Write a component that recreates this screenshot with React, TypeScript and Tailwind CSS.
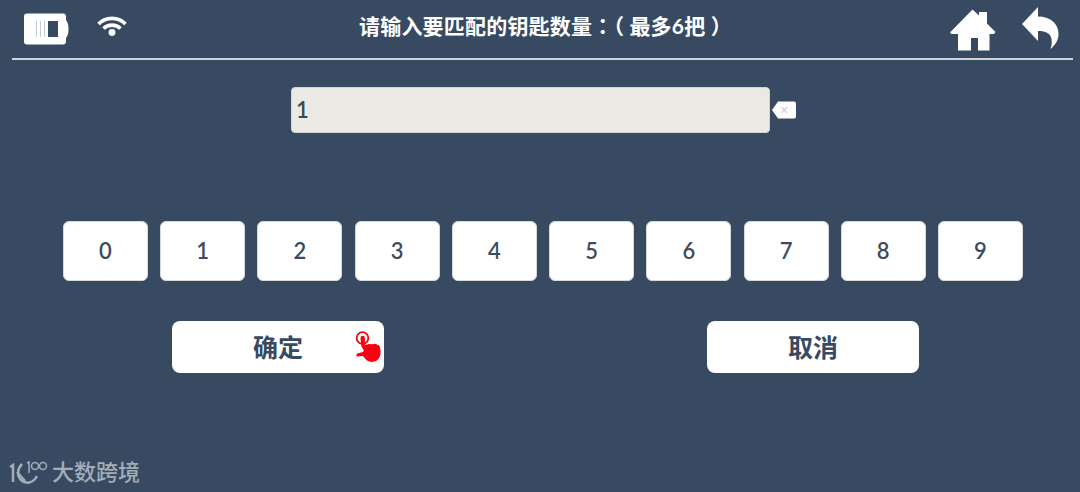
import React from 'react'

const keys = ['0', '1', '2', '3', '4', '5', '6', '7', '8', '9']

function Battery() {
  return (
    <svg width="45" height="32" viewBox="0 0 45 32">
      <path d="M3 0.500h36a3 3 0 0 1 3 3v4h.5c1.500 3 2 5 2 8.500s-.5 6-2 8.500H42v4a3 3 0 0 1-3 3H3a3 3 0 0 1-3-3v-25a3 3 0 0 1 3-3z" fill="#fff" />
      <rect x="8" y="8" width="26" height="16" fill="#374a61" />
      <rect x="8" y="8" width="16" height="16" fill="#fff" />
      <rect x="12" y="8" width="1" height="16" fill="#c5ccd4" />
      <rect x="16" y="8" width="1" height="16" fill="#c5ccd4" />
      <rect x="20" y="8" width="1" height="16" fill="#c5ccd4" />
    </svg>
  )
}

function Wifi() {
  return (
    <svg width="30" height="20" viewBox="0 0 30 20" fill="none" stroke="#fff" strokeWidth="3.600">
      <path d="M1.500 8C9 .5 21 .5 28.500 8" />
      <path d="M6.500 12.500C11 8 19 8 23.500 12.500" />
      <circle cx="15" cy="16.500" r="3.400" fill="#fff" stroke="none" />
    </svg>
  )
}

function Home() {
  return (
    <svg width="46" height="42" viewBox="0 0 46 42" fill="#fff">
      <path d="M22.500 0.500L29 6.500V3h8v11.500l8.500 8.500-1.500 2h-4.500v16.500H28V29h-7v12.500H8V25H1.500L0 23.500z" />
    </svg>
  )
}

function Back() {
  return (
    <svg width="37" height="42" viewBox="0 0 37 42" fill="#fff">
      <path d="M16 0V9.500C28 9.500 36.500 16 36.500 27c0 6-3 11-8 15 1.500-4 2-9 0-13-2-3.500-6-5-12.500-5v10L0 17z" />
    </svg>
  )
}

function Backspace() {
  return (
    <svg width="24" height="18" viewBox="0 0 24 18">
      <path d="M6 0.500h16a2 2 0 0 1 2 2v13a2 2 0 0 1-2 2H6L0 9z" fill="#fff" />
      <path d="M9.500 6l5.500 6M15 6l-5.500 6" stroke="#d0d3d6" strokeWidth="1.200" />
    </svg>
  )
}

function Hand() {
  return (
    <svg width="28" height="34" viewBox="0 0 28 34">
      <circle cx="7.500" cy="8" r="5.800" fill="none" stroke="#fb0010" strokeWidth="1.800" />
      <path d="M5.500 8a2.200 2.200 0 0 1 4.400 0v7l2-.5 2-.5 3 .3 3-.5 4 1.500c1.500 2 2 6 1.500 9-.6 3.500-2.500 6-5 7l-4.500.6-4-1.500-4-4.500-5.500.6c-1.500-.2-1.500-2.300 0-3l5.500-1.500 1-1.500-2.500-4z" fill="#fb0010" />
    </svg>
  )
}

function Logo() {
  return (
    <svg width="42" height="28" viewBox="0 0 42 28" fill="none" stroke="#a3adb8">
      <path d="M1 9l3-2v17" strokeWidth="2.500" />
      <path d="M13 6C8 11 8 18 12 22c4 4 12 4 16-4" strokeWidth="2.500" />
      <path d="M8 14l8 9" strokeWidth="2.500" />
      <path d="M18 5l2-1v11" strokeWidth="1.500" />
      <circle cx="26" cy="8" r="3.500" strokeWidth="1.500" />
      <circle cx="34" cy="8" r="3.500" strokeWidth="1.500" />
    </svg>
  )
}

export default function App() {
  return (
    <div className="relative w-[1080px] h-[492px] overflow-hidden bg-[#374a61] font-['Lato','Noto_Sans_CJK_SC',sans-serif]">
      <header className="mx-3 w-[1061px] h-[60px] border-b-2 border-[#cfd4d9] flex items-center">
        <div className="w-[12px]" />
        <Battery />
        <div className="ml-[28px] mb-[6px]">
          <Wifi />
        </div>
        <h1 className="ml-[232px] mb-[6px] w-[364px] text-white text-[21px] font-bold tracking-[0.2px] whitespace-nowrap">
          请输入要匹配的钥匙数量<span className="font-['Noto_Sans_CJK_TC']">：</span>（ 最多6把 ）
        </h1>
        <div className="ml-[227px] mt-[2px]">
          <Home />
        </div>
        <div className="ml-[26px] mb-[2px]">
          <Back />
        </div>
      </header>

      <div className="mt-[27px] ml-[291px] flex items-center gap-[2px]">
        <input
          readOnly
          value="1"
          className="w-[479px] h-[46px] rounded-[4px] border border-[#d5d5d0] bg-[#eae9e3] px-[4px] pb-[2px] text-[22px] text-[#374a61] font-semibold outline-none"
        />
        <Backspace />
      </div>

      <div className="mt-[88px] mx-[63px] w-[960px] flex justify-between">
        {keys.map((k) => (
          <button key={k} className="w-[85px] h-[60px] rounded-[6px] bg-white border border-[#d5d9dd] pb-[2px] text-[#3d4c5f] text-[22px] font-semibold">
            {k}
          </button>
        ))}
      </div>

      <div className="mt-[40px] ml-[172px] flex gap-[323px]">
        <button className="relative w-[212px] h-[52px] rounded-[8px] bg-white pt-[2px] text-[#374a61] text-[25px] font-bold">
          确定
          <span className="absolute right-[1px] top-[9px]">
            <Hand />
          </span>
        </button>
        <button className="w-[212px] h-[52px] rounded-[8px] bg-white pt-[2px] text-[#374a61] text-[25px] font-bold">
          取消
        </button>
      </div>

      <div className="absolute left-[9px] bottom-[6px] flex items-center gap-[1px] text-[#a3adb8] text-[22px] font-medium leading-none">
        <Logo />
        <span>大数跨境</span>
      </div>
    </div>
  )
}
